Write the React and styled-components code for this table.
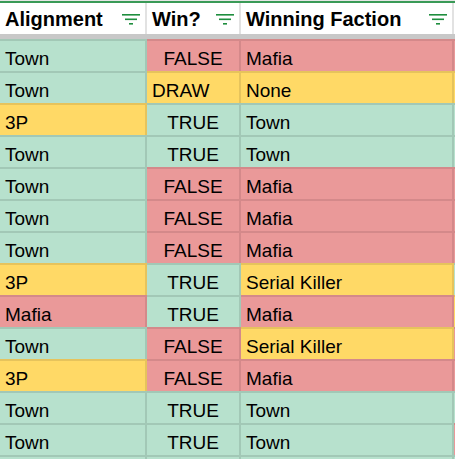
import React from 'react'
import styled, { createGlobalStyle } from 'styled-components';

const tones = {
  g: { bg: '#b7e1cd', line: '#a2c8b6' },
  r: { bg: '#ea9999', line: '#d4898a' },
  y: { bg: '#ffd966', line: '#e6c35c' },
};

// the last row is only a sliver at the bottom edge, so it has no text
const rows = [
  ['Town', 'g', 'FALSE', 'r', 'Mafia', 'r', 'r'],
  ['Town', 'g', 'DRAW', 'y', 'None', 'y', 'y'],
  ['3P', 'y', 'TRUE', 'g', 'Town', 'g', 'g'],
  ['Town', 'g', 'TRUE', 'g', 'Town', 'g', 'g'],
  ['Town', 'g', 'FALSE', 'r', 'Mafia', 'r', 'r'],
  ['Town', 'g', 'FALSE', 'r', 'Mafia', 'r', 'r'],
  ['Town', 'g', 'FALSE', 'r', 'Mafia', 'r', 'r'],
  ['3P', 'y', 'TRUE', 'g', 'Serial Killer', 'y', 'g'],
  ['Mafia', 'r', 'TRUE', 'g', 'Mafia', 'r', 'y'],
  ['Town', 'g', 'FALSE', 'r', 'Serial Killer', 'y', 'r'],
  ['3P', 'y', 'FALSE', 'r', 'Mafia', 'r', 'r'],
  ['Town', 'g', 'TRUE', 'g', 'Town', 'g', 'g'],
  ['Town', 'g', 'TRUE', 'g', 'Town', 'g', 'r'],
  ['', 'g', '', 'g', '', 'g', 'g'],
];

const FilterIcon = () => (
  <svg width="18" height="11" viewBox="0 0 18 11">
    <rect x="0" y="0" width="18" height="1.6" fill="#1e8e3e" />
    <rect x="3" y="4.5" width="12" height="1.6" fill="#1e8e3e" />
    <rect x="7" y="9" width="4" height="1.6" fill="#1e8e3e" />
  </svg>
);

const isBool = (v) => v === 'TRUE' || v === 'FALSE';

const App = () => {
  return (
    <>
      <Global />
      <Sheet>
        <TopRule />
        <HeaderRow>
          <HeaderCell>
            <Label>Alignment</Label>
            <FilterIcon />
          </HeaderCell>
          <HeaderCell>
            <Label>Win?</Label>
            <FilterIcon />
          </HeaderCell>
          <HeaderCell>
            <Label>Winning Faction</Label>
            <FilterIcon />
          </HeaderCell>
          <HeaderCell $last />
        </HeaderRow>
        <FrozenBar />
        {rows.map(([a, at, w, wt, f, ft, s], i) => (
          <Row key={i}>
            <Cell $tone={at}>{a}</Cell>
            <Cell $tone={wt} $center={isBool(w)}>{w}</Cell>
            <Cell $tone={ft}>{f}</Cell>
            <Cell $tone={s} $last />
          </Row>
        ))}
      </Sheet>
    </>
  )
}

export default App;

const Global = createGlobalStyle`
  html, body {
    margin: 0;
    padding: 0;
    background: #ffffff;
  }
`
const Sheet = styled.div`
  width: 455px;
  height: 459px;
  overflow: hidden;
  background: #ffffff;
  font-family: "Liberation Sans", Arial, sans-serif;
  color: #000;
`
const TopRule = styled.div`
  height: 2px;
  border-top: 1px solid #e6e6e6;
  background: #3a9a57;
`
const columns = '147px 94px 213px 1fr';

const HeaderRow = styled.div`
  display: grid;
  grid-template-columns: ${columns};
  height: 31px;
`
const HeaderCell = styled.div`
  box-sizing: border-box;
  display: flex;
  align-items: center;
  justify-content: space-between;
  padding: 0 5px 0 5px;
  border-right: ${(p) => (p.$last ? 'none' : '2px solid #e2e2e2')};
  svg {
    margin-top: 1px;
  }
`
const Label = styled.span`
  font-size: 20px;
  font-weight: 700;
  line-height: 23px;
  padding-top: 2px;
  white-space: nowrap;
`
const FrozenBar = styled.div`
  height: 5px;
  background: #c8c8c8;
`
const Row = styled.div`
  display: grid;
  grid-template-columns: ${columns};
  height: 32px;
`
const Cell = styled.div`
  box-sizing: border-box;
  display: flex;
  align-items: flex-end;
  justify-content: ${(p) => (p.$center ? 'center' : 'flex-start')};
  padding: 0 ${(p) => (p.$last ? '0' : '5px')} 1px;
  background: ${(p) => tones[p.$tone].bg};
  border-top: 2px solid ${(p) => tones[p.$tone].line};
  border-right: ${(p) => (p.$last ? 'none' : `2px solid ${tones[p.$tone].line}`)};
  font-size: 19px;
  line-height: 22px;
  white-space: nowrap;
  overflow: hidden;
`
